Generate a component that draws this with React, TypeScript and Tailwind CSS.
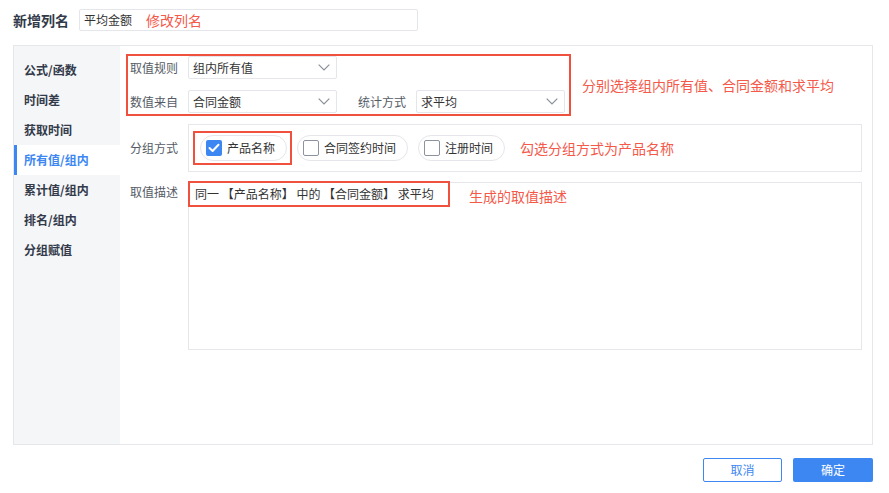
const RED = 'text-[#f4594a]';

const Chevron = () => (
  <svg width="12" height="7" viewBox="0 0 12 7" fill="none" className="shrink-0">
    <path d="M0.7 0.7 L6 6 L11.3 0.7" stroke="#8a8f99" strokeWidth="1.2" />
  </svg>
);

const Select = ({ value, className = '' }: { value: string; className?: string }) => (
  <div
    className={`flex items-center justify-between h-[23px] w-[149px] border border-[#e4e6eb] rounded-[2px] bg-white pl-[4px] pr-[6px] text-[12px] text-[#333] ${className}`}
  >
    <span>{value}</span>
    <Chevron />
  </div>
);

const Check = ({ checked }: { checked?: boolean }) =>
  checked ? (
    <span className="flex items-center justify-center w-[16px] h-[16px] rounded-[2px] bg-[#3d87f2]">
      <svg width="12" height="10" viewBox="0 0 12 10" fill="none">
        <path d="M1.5 5 L4.6 8 L10.5 1.8" stroke="white" strokeWidth="2" strokeLinecap="round" strokeLinejoin="round" />
      </svg>
    </span>
  ) : (
    <span className="w-[16px] h-[16px] rounded-[2px] border border-[#8d939c] bg-white" />
  );

const Pill = ({ label, checked }: { label: string; checked?: boolean }) => (
  <div className="flex items-center gap-[5px] h-[26px] pl-[5px] pr-[11px] rounded-full border border-[#e4e6eb] bg-white text-[12px] text-[#333]">
    <Check checked={checked} />
    <span>{label}</span>
  </div>
);

const menu = ['公式/函数', '时间差', '获取时间', '所有值/组内', '累计值/组内', '排名/组内', '分组赋值'];

export default function App() {
  return (
    <div
      className="w-[889px] h-[493px] bg-white flex flex-col"
      style={{ fontFamily: '"Noto Sans CJK SC", "Noto Sans", sans-serif' }}
    >
      {/* header */}
      <div className="flex items-center pt-[9px] pl-[13px] h-[31px]">
        <span className="text-[14px] font-bold text-[#333a4a] w-[66px]">新增列名</span>
        <div className="flex items-center h-[22px] w-[339px] border border-[#e4e6eb] rounded-[2px] pl-[4px]">
          <span className="text-[12px] text-[#333]">平均金额</span>
          <span className={`ml-[14px] text-[14px] ${RED}`}>修改列名</span>
        </div>
      </div>

      {/* panel */}
      <div className="ml-[13px] mt-[14px] w-[860px] h-[400px] border border-[#e6e7eb] flex">
        <div className="w-[106px] bg-[#f5f6f8] pt-[9px] flex flex-col">
          {menu.map((m) =>
            m === '所有值/组内' ? (
              <div key={m} className="h-[30px] flex items-center bg-white border-l-[3px] border-[#3d87f2] pl-[7px] text-[12px] font-semibold text-[#3d87f2]">
                {m}
              </div>
            ) : (
              <div key={m} className="h-[30px] flex items-center pl-[10px] text-[12px] font-semibold text-[#333a4a]">
                {m}
              </div>
            )
          )}
        </div>

        <div className="flex-1 pl-[6px] pr-[10px] pt-[8px] flex flex-col">
          {/* rules group */}
          <div className="flex items-center">
            <div className="w-[445px] h-[62px] border-2 border-[#f0503e] pl-[2px] flex flex-col gap-[11px]">
              <div className="flex items-center">
                <span className="w-[58px] text-[12px] text-[#555b66]">取值规则</span>
                <Select value="组内所有值" />
              </div>
              <div className="flex items-center">
                <span className="w-[58px] text-[12px] text-[#555b66]">数值来自</span>
                <Select value="合同金额" />
                <span className="ml-[21px] w-[58px] text-[12px] text-[#555b66]">统计方式</span>
                <Select value="求平均" />
              </div>
            </div>
            <span className={`ml-[11px] text-[14px] ${RED}`}>分别选择组内所有值、合同金额和求平均</span>
          </div>

          {/* group by */}
          <div className="flex items-center mt-[8px] pl-[4px]">
            <span className="w-[58px] text-[12px] text-[#555b66]">分组方式</span>
            <div className="flex-1 h-[48px] border border-[#e6e7eb] flex items-center pl-[11px] gap-[10px]">
              <div className="relative">
                <Pill label="产品名称" checked />
                <div className="absolute -left-[7px] -right-[5px] -top-[4px] -bottom-[4px] border-2 border-[#f0503e]" />
              </div>
              <Pill label="合同签约时间" />
              <Pill label="注册时间" />
              <span className={`ml-[5px] text-[14px] ${RED}`}>勾选分组方式为产品名称</span>
            </div>
          </div>

          {/* description */}
          <div className="flex mt-[10px] pl-[4px]">
            <span className="w-[58px] pt-[1px] text-[12px] text-[#555b66]">取值描述</span>
            <div className="flex-1 h-[168px] border border-[#e6e7eb]">
              <div className="flex items-center -mt-[2px] -ml-[1px]">
                <div className="w-[262px] h-[26px] border-2 border-[#f0503e] flex items-center pl-[5px] text-[12px] text-[#333]">
                  同一 【产品名称】 中的 【合同金额】 求平均
                </div>
                <span className={`ml-[19px] mt-[4px] text-[14px] ${RED}`}>生成的取值描述</span>
              </div>
            </div>
          </div>
        </div>
      </div>

      {/* footer */}
      <div className="flex justify-end gap-[11px] mt-[13px] pr-[16px]">
        <button className="w-[79px] h-[24px] border border-[#3d87f2] rounded-[2px] text-[12px] text-[#3d87f2] bg-white">
          取消
        </button>
        <button className="w-[80px] h-[24px] rounded-[2px] text-[12px] text-white bg-[#3d87f2]">确定</button>
      </div>
    </div>
  );
}
